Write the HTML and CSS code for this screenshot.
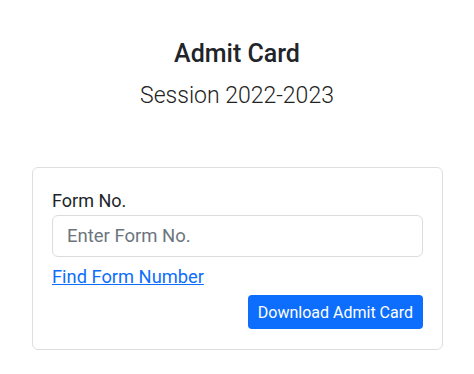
FILE: index.html
```html
<!DOCTYPE html>
<html lang="en">
<head>
<meta charset="utf-8">
<title>Admit Card</title>
<link rel="stylesheet" href="styles.css">
</head>
<body>
<header class="heading">
  <h1 class="title">Admit Card</h1>
  <p class="session">Session 2022-2023</p>
</header>
<form class="card">
  <label class="label" for="formno">Form No.</label>
  <input class="input" id="formno" type="text" placeholder="Enter Form No.">
  <a class="link" href="#">Find Form Number</a>
  <div class="actions">
    <button class="btn" type="button">Download Admit Card</button>
  </div>
</form>
</body>
</html>
```
FILE: styles.css
```css
* { box-sizing: border-box; }
html, body { margin: 0; padding: 0; background: #fff; }
body {
  font-family: Roboto, "Liberation Sans", sans-serif;
  color: #212529;
  width: 474px;
}
.heading {
  display: flex;
  flex-direction: column;
  align-items: center;
  padding-top: 39px;
}
.title {
  margin: 0;
  font-size: 25px;
  font-weight: 500;
  line-height: 29px;
  color: #212529;
}
.session {
  margin: 13px 0 0;
  font-size: 23px;
  font-weight: 300;
  line-height: 29px;
  color: #222;
}
.card {
  display: flex;
  flex-direction: column;
  margin: 57px 0 0 32px;
  width: 411px;
  padding: 19px 19px 20px;
  border: 1px solid #dedede;
  border-radius: 6px;
}
.label {
  font-size: 18px;
  line-height: 28px;
  color: #212529;
}
.input {
  height: 42px;
  width: 100%;
  padding: 0 14px;
  border: 1px solid #dcdcdc;
  border-radius: 6px;
  font-family: inherit;
  font-size: 18.5px;
  color: #212529;
  outline: none;
}
.input::placeholder { color: #6c757d; }
.link {
  align-self: flex-start;
  margin-top: 6px;
  font-size: 18.3px;
  line-height: 27px;
  color: #0d6efd;
  text-decoration: underline;
}
.actions {
  display: flex;
  justify-content: flex-end;
  margin-top: 5px;
}
.btn {
  height: 34px;
  padding: 0 10px;
  border: none;
  border-radius: 4px;
  background: #0d6efd;
  color: #fff;
  font-family: inherit;
  font-size: 16px;
}
```
